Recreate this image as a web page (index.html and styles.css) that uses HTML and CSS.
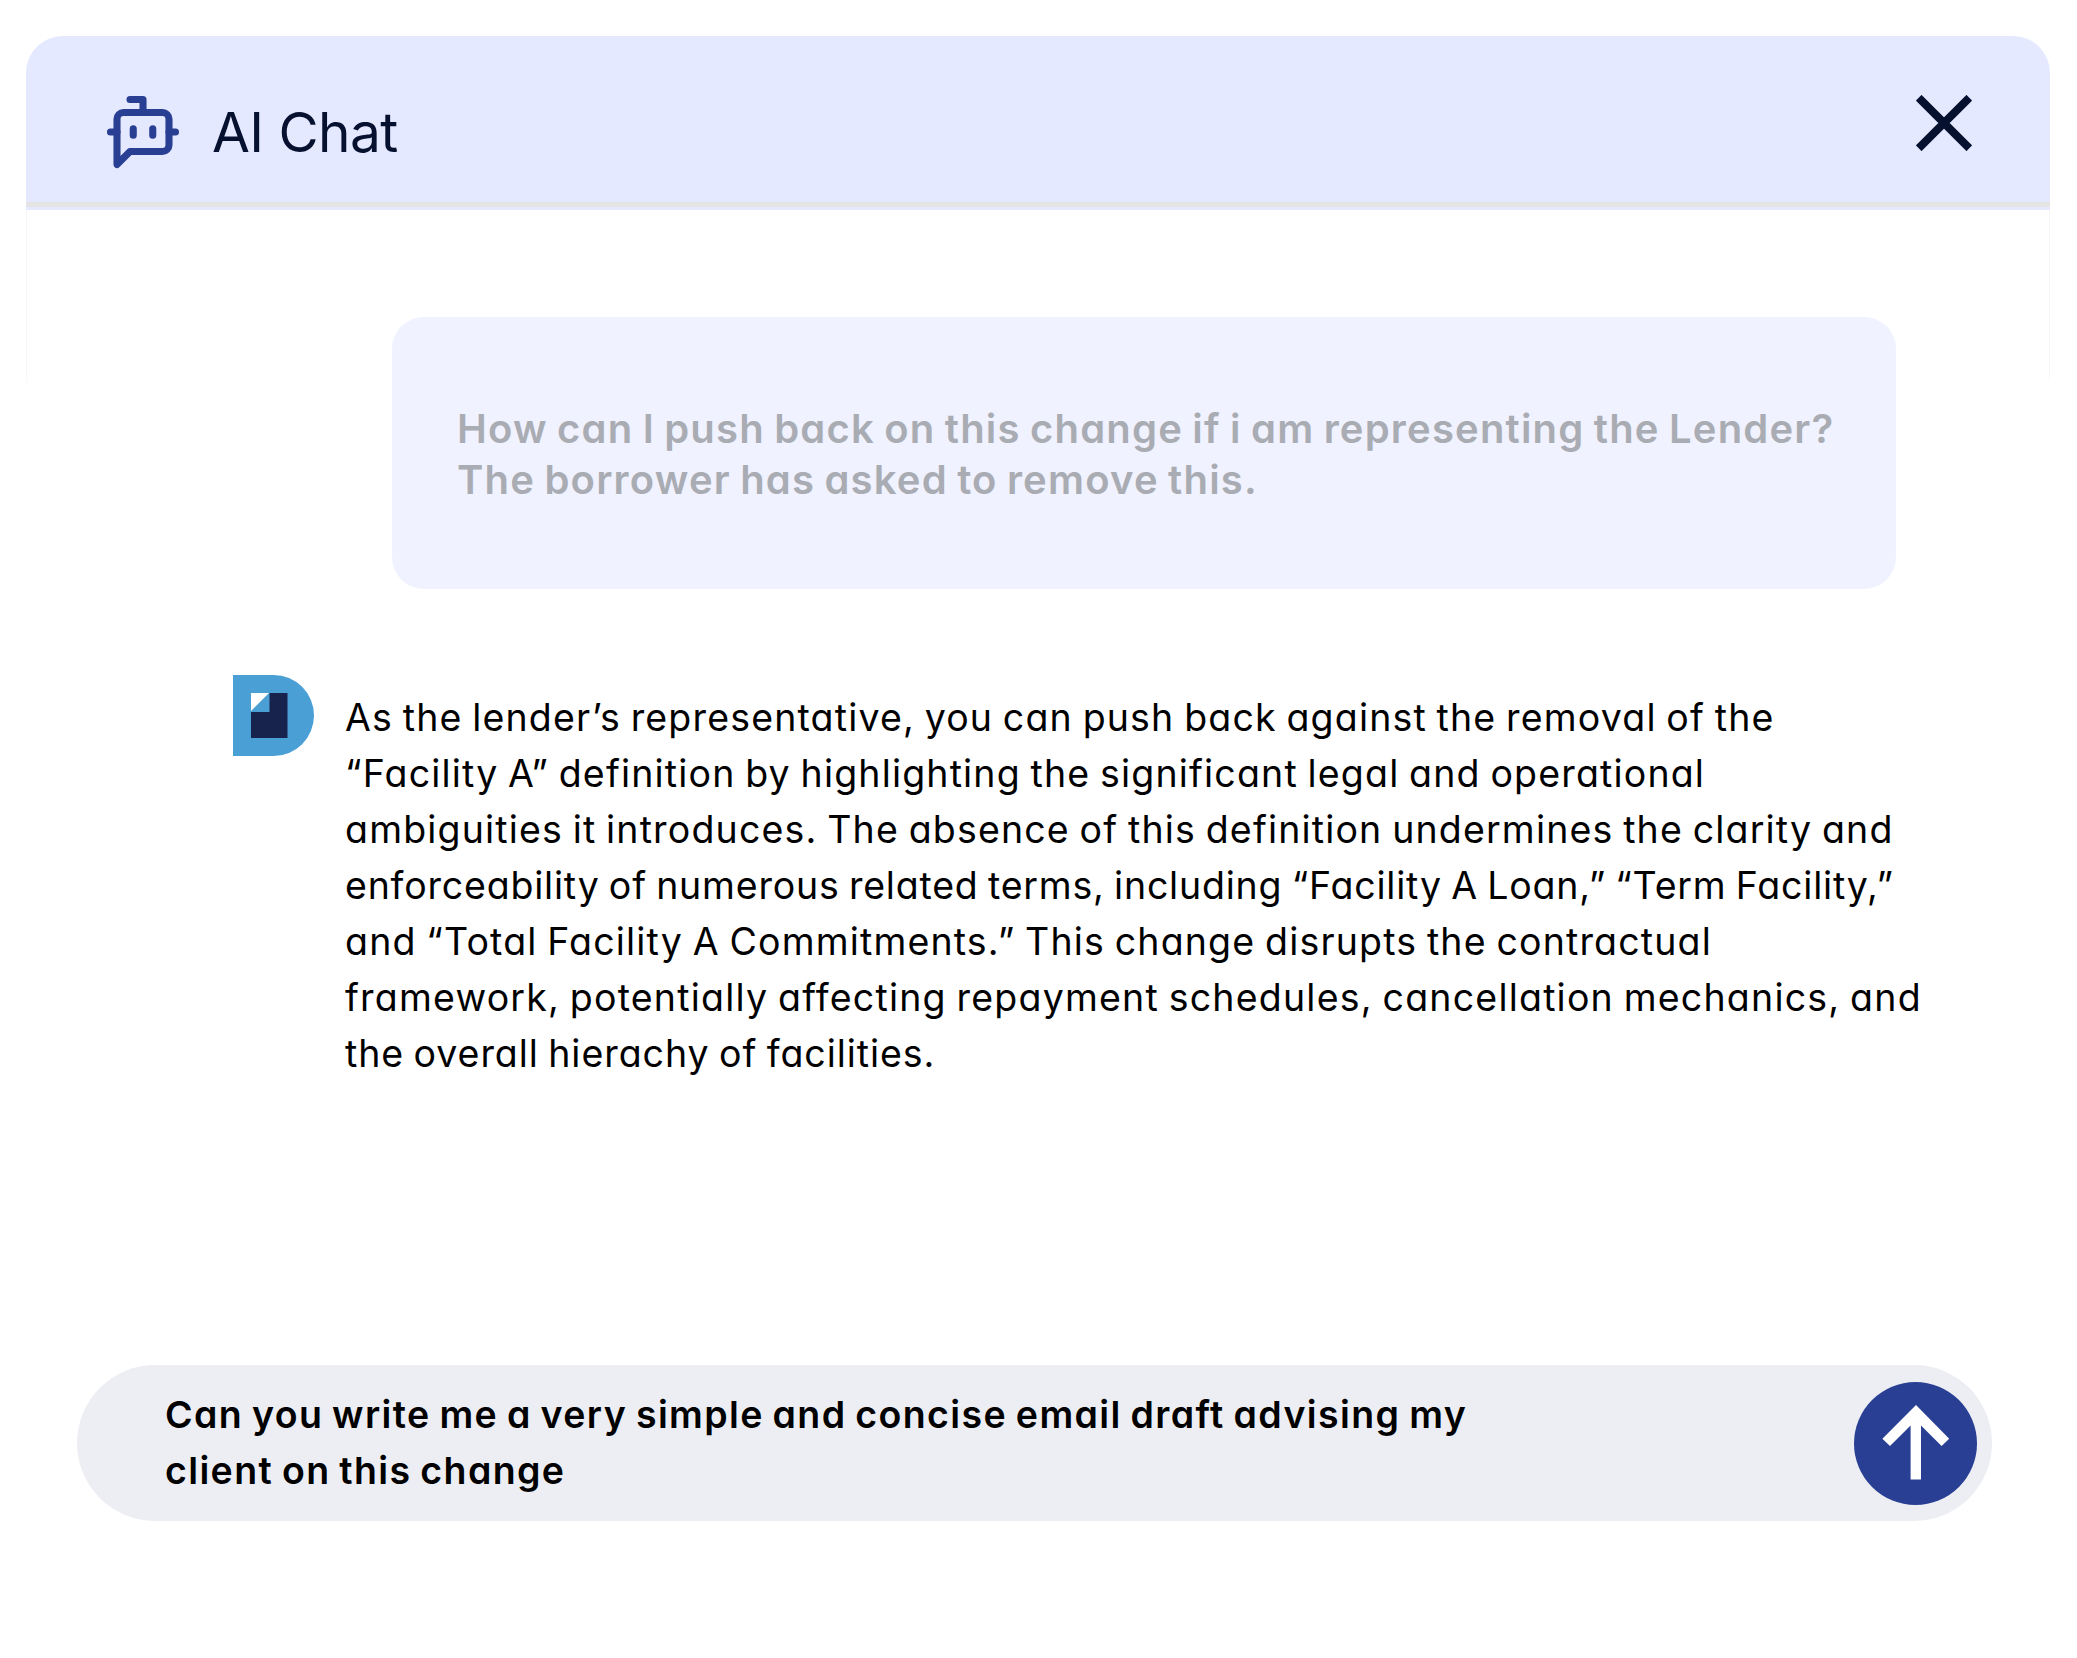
FILE: index.html
```
<!DOCTYPE html>
<html lang="en">
<head>
  <meta charset="UTF-8" />
  <meta name="viewport" content="width=device-width, initial-scale=1.0"/>
  <title>AI Chat</title>
  <link rel="stylesheet" href="styles.css">
</head>
<body>
<div class="chat">
  <header class="chat-header">
    <svg class="bot-icon" viewBox="0 0 24 24" fill="none" stroke="currentColor" stroke-width="2.18" stroke-linecap="round" stroke-linejoin="round">
      <path d="M12 6V2H8"/>
      <path d="m8 18-4 4V8a2 2 0 0 1 2-2h12a2 2 0 0 1 2 2v8a2 2 0 0 1-2 2Z"/>
      <path d="M2 12h2M9 11v2M15 11v2M20 12h2"/>
    </svg>
    <h1 class="chat-title">AI Chat</h1>
    <button class="close-btn" aria-label="Close">
      <svg viewBox="0 0 56 56" stroke="currentColor" stroke-width="8"><path d="M2.7 2.7l50.6 50.6M53.3 2.7L2.7 53.3"/></svg>
    </button>
  </header>

  <main class="messages">
    <div class="question">
      <span class="line">How can I push back on this change if i am representing the Lender?</span>
      <span class="line">The borrower has asked to remove this.</span>
    </div>

    <div class="answer">
      <svg class="logo" viewBox="0 0 81 81">
        <path fill="#4a9fd5" d="M0 0h40.5a40.5 40.5 0 0 1 0 81H0z"/>
        <path fill="#17224d" d="M18 18h36.5v45H18z"/>
        <path fill="#4a9fd5" d="M18 18h18.5v19H18z"/>
        <path fill="#fff" d="M18 18h18L18 36z"/>
      </svg>
      <p class="answer-text">
        <span class="line">As the lender’s representative, you can push back against the removal of the</span>
        <span class="line">“Facility A” definition by highlighting the significant legal and operational</span>
        <span class="line">ambiguities it introduces. The absence of this definition undermines the clarity and</span>
        <span class="line tight">enforceability of numerous related terms, including “Facility A Loan,” “Term Facility,”</span>
        <span class="line">and “Total Facility A Commitments.” This change disrupts the contractual</span>
        <span class="line wide">framework, potentially affecting repayment schedules, cancellation mechanics, and</span>
        <span class="line last">the overall hierachy of facilities.</span>
      </p>
    </div>
  </main>

  <div class="composer">
    <div class="composer-text">
      <span class="line">Can you write me a very simple and concise email draft advising my</span>
      <span class="line">client on this change</span>
    </div>
    <button class="send-btn" aria-label="Send">
      <svg viewBox="0 0 123 123"><path fill="#fff" d="M62 23L28.4 56.7l7.6 7.4 20.6-20.6v54h10.4v-54l20.6 20.6 7.6-7.4z"/></svg>
    </button>
  </div>
</div>
</body>
</html>
```
FILE: styles.css
```
* {
  box-sizing: border-box;
}
body {
  margin: 0;
  background: #fff;
  font-family: Inter, "Open Sans", sans-serif;
  color: #000;
}
.chat {
  width: 2024px;
  height: 1658px;
  margin-left: 26px;
  padding-top: 36px;
  display: flex;
  flex-direction: column;
}
.chat-header {
  position: relative;
  height: 174px;
  padding: 0 78px;
  display: flex;
  align-items: flex-start;
  background: #e4e9ff;
  border-radius: 37px 37px 0 0;
}
/* grey divider just above the bottom edge of the header */
.chat-header::after {
  content: "";
  position: absolute;
  left: 0;
  right: 0;
  bottom: 3px;
  height: 5px;
  background: #e4e4e4;
}
.bot-icon {
  width: 78px;
  height: 78px;
  margin-top: 57px;
  color: #293f93;
}
.chat-title {
  margin: 62px 0 0 30px;
  font-size: 55px;
  line-height: 68px;
  font-weight: 400;
  letter-spacing: -0.6px;
  color: #06102f;
}
.close-btn {
  width: 56px;
  height: 56px;
  margin: 59px 0 0 auto;
  padding: 0;
  border: none;
  background: none;
  color: #06102f;
}
.close-btn svg,
.send-btn svg {
  display: block;
  width: 100%;
  height: 100%;
}
.messages {
  height: 1155px;
  padding: 107px 100px 0 206px;
  border-left: 1px solid;
  border-right: 1px solid;
  border-image: linear-gradient(#f5f5f5 0, #f5f5f5 165px, transparent 175px) 1;
}
.line {
  display: block;
  white-space: nowrap;
}
.question,
.answer-text,
.composer-text {
  font-feature-settings: "cv11"; /* single-storey a */
  word-spacing: -2px;
}
.question {
  width: 1504px;
  height: 272px;
  margin-left: 159px;
  padding: 86px 0 0 65px;
  background: #f0f2ff;
  border-radius: 32px;
  font-size: 40px;
  line-height: 51px;
  font-weight: 600;
  letter-spacing: 1.2px;
  color: #a9acb3;
}
.answer {
  margin-top: 86px;
  display: flex;
  align-items: flex-start;
}
.logo {
  flex: none;
  width: 81px;
  height: 81px;
}
.answer-text {
  margin: 15px 0 0 31px;
  font-size: 37.5px;
  line-height: 56px;
  letter-spacing: 1.17px;
}
.answer-text .tight {
  letter-spacing: 0.8px;
}
.answer-text .wide {
  letter-spacing: 1.21px;
}
.answer-text .last {
  letter-spacing: 0.94px;
}
.composer {
  width: 1915px;
  height: 156px;
  margin-left: 51px;
  padding: 0 15px 0 88px;
  display: flex;
  align-items: center;
  justify-content: space-between;
  background: #edeef4;
  border-radius: 78px;
}
.composer-text {
  font-size: 37.5px;
  line-height: 56px;
  font-weight: 600;
  letter-spacing: 1.38px;
}
.send-btn {
  width: 123px;
  height: 123px;
  padding: 0;
  border: none;
  border-radius: 50%;
  background: #293f93;
}
```
